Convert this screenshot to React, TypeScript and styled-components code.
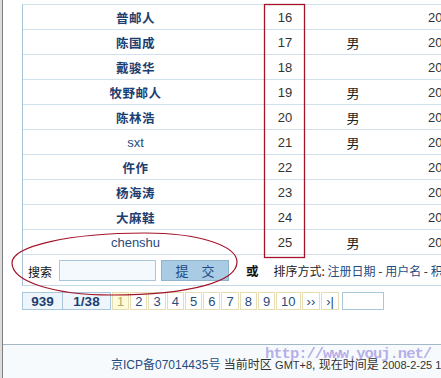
import React from 'react';
import styled, { createGlobalStyle, css } from 'styled-components';

interface Member {
  no: number;
  name: string;
  sex: string;
  latin?: boolean;
}

const members: Member[] = [
  { no: 16, name: '普邮人', sex: '' },
  { no: 17, name: '陈国成', sex: '男' },
  { no: 18, name: '戴骏华', sex: '' },
  { no: 19, name: '牧野邮人', sex: '男' },
  { no: 20, name: '陈林浩', sex: '男' },
  { no: 21, name: 'sxt', sex: '男', latin: true },
  { no: 22, name: '仵作', sex: '' },
  { no: 23, name: '杨海涛', sex: '' },
  { no: 24, name: '大麻鞋', sex: '' },
  { no: 25, name: 'chenshu', sex: '男', latin: true },
];

const pages = ['1', '2', '3', '4', '5', '6', '7', '8', '9', '10', '››', '›|'];

export default function App() {
  return (
    <Root>
      <GlobalStyle />
      <Frame>
        <Main>
          <Board>
            {members.map((m) => (
              <Row key={m.no}>
                <NameCell latin={!!m.latin}>{m.name}</NameCell>
                <NumCell>{m.no}</NumCell>
                <SexCell>{m.sex}</SexCell>
                <DateCell>2008-02-2{m.no % 10}</DateCell>
              </Row>
            ))}
            <SearchRow>
              <Label>搜索</Label>
              <SearchInput />
              <Submit>提　交</Submit>
              <Or>或</Or>
              <Sort>
                排序方式: <SortLink>注册日期</SortLink> - <SortLink>用户名</SortLink> - <SortLink>积分</SortLink>
              </Sort>
            </SearchRow>
          </Board>
          <Pager>
            <Stat>939</Stat>
            <Stat joined>1/38</Stat>
            {pages.map((p, i) => (
              <PageBox key={p} current={i === 0}>
                {p}
              </PageBox>
            ))}
            <JumpInput />
          </Pager>
        </Main>
        <Footer>
          <FooterText>
            <FooterLink>京ICP备07014435号</FooterLink> 当前时区 <Small>GMT+8</Small>, 现在时间是 <Small>2008-2-25 12:30</Small>
          </FooterText>
          <Watermark>http://www.youj.net/</Watermark>
        </Footer>
      </Frame>
      <Marks width="441" height="378" viewBox="0 0 441 378">
        <rect x="264.5" y="4.5" width="40" height="253" fill="none" stroke="#a3142a" strokeWidth="1.3" />
        <path
          d="M 12 263 C 12 246, 70 233, 145 233 C 200 233, 237 246, 237 262 C 237 281, 192 295, 112 295 C 52 295, 12 281, 12 263 Z"
          fill="none"
          stroke="#a3142a"
          strokeWidth="1.2"
        />
      </Marks>
    </Root>
  );
}

const GlobalStyle = createGlobalStyle`
  html, body {
    margin: 0;
    padding: 0;
    background: #dcdcdc;
    overflow: hidden;
  }
  body {
    font-family: 'Liberation Sans', 'Noto Sans CJK SC', sans-serif;
    font-size: 12px;
    color: #333;
  }
`;

const Root = styled.div`
  position: relative;
  width: 441px;
  height: 378px;
  overflow: hidden;
`;

const Frame = styled.div`
  margin-left: 2px;
  height: 378px;
  display: flex;
  flex-direction: column;
  background: #fff;
  border-left: 1px solid #808080;
`;

const Main = styled.div`
  padding: 4px 0 0 19px;
`;

const Board = styled.div`
  width: 560px;
  border-left: 1px solid #a9c4d6;
  border-top: 1px solid #cfe2ee;
`;

const Row = styled.div`
  display: grid;
  grid-template-columns: 225px 74px 62px 1fr;
  height: 24px;
  align-items: center;
  border-bottom: 1px solid #cfe2ee;
`;

const NameCell = styled.div<{ latin: boolean }>`
  text-align: center;
  color: #1d3e70;
  font-weight: bold;
  font-size: 12.5px;
  letter-spacing: 0.5px;
  font-family: 'Noto Sans CJK SC', sans-serif;

  ${(props) =>
    props.latin &&
    css`
      font-family: 'Liberation Sans', sans-serif;
      font-weight: normal;
      font-size: 13px;
      letter-spacing: 0;
      color: #2a4b7c;
    `}
`;

const NumCell = styled.div`
  text-align: center;
  font-size: 13px;
  color: #333;
`;

const SexCell = styled.div`
  text-align: center;
  font-size: 13px;
  color: #222;
  font-family: 'Noto Sans CJK SC', sans-serif;
`;

const DateCell = styled.div`
  padding-left: 44px;
  font-size: 13px;
  color: #333;
  white-space: nowrap;
`;

const SearchRow = styled.div`
  display: flex;
  align-items: center;
  height: 30px;
  padding-left: 5px;
  border-bottom: 1px solid #c4d9e6;
  white-space: nowrap;
`;

const Label = styled.span`
  font-family: 'Noto Sans CJK SC', sans-serif;
  font-size: 12px;
  color: #111;
  margin-top: 3px;
`;

const SearchInput = styled.input`
  box-sizing: border-box;
  width: 97px;
  height: 21px;
  margin-left: 7px;
  border: 1px solid #a9c7dc;
  background: #f3f9fd;
  padding: 0 3px;
`;

const Submit = styled.button`
  box-sizing: border-box;
  width: 68px;
  height: 21px;
  margin-left: 5px;
  border: 1px solid #8fb3cd;
  background: #a9cbe3;
  color: #1d4a85;
  font-family: 'Noto Sans CJK SC', sans-serif;
  font-size: 13px;
  padding: 0;
  line-height: 19px;
`;

const Or = styled.span`
  margin-left: 17px;
  font-weight: bold;
  font-size: 12.5px;
  color: #111;
  font-family: 'Noto Sans CJK SC', sans-serif;
`;

const Sort = styled.span`
  margin-left: 15px;
  font-size: 12px;
  color: #222;
  font-family: 'Noto Sans CJK SC', sans-serif;
`;

const SortLink = styled.span`
  color: #1f4c82;
`;

const Pager = styled.div`
  display: flex;
  align-items: stretch;
  height: 18px;
  margin-top: 6px;
  font-family: 'Liberation Sans', sans-serif;
`;

const Stat = styled.span<{ joined?: boolean }>`
  box-sizing: border-box;
  display: flex;
  align-items: center;
  justify-content: center;
  width: ${(props) => (props.joined ? '48px' : '41px')};
  border: 1px solid #a9c7dc;
  background: #eef5fb;
  color: #1d3e70;
  font-weight: bold;
  font-size: 13.5px;

  ${(props) =>
    props.joined &&
    css`
      border-left: none;
      margin-right: 1px;
    `}
`;

const PageBox = styled.span<{ current: boolean }>`
  box-sizing: border-box;
  display: flex;
  align-items: center;
  justify-content: center;
  min-width: 17px;
  padding: 0 4px;
  margin-right: 1px;
  border: 1px solid #e6ddb4;
  background: #fff;
  color: #2a4b7c;
  font-size: 13px;

  ${(props) =>
    props.current &&
    css`
      background: #fdfbd8;
      color: #b4aa6a;
    `}
`;

const JumpInput = styled.input`
  box-sizing: border-box;
  width: 42px;
  height: 18px;
  margin-left: 2px;
  border: 1px solid #a9c7dc;
  background: #fff;
`;

const Footer = styled.div`
  position: relative;
  margin-top: auto;
  height: 33px;
  border-top: 1px solid #a3b8c6;
  background: #f7fafc;
  display: flex;
  align-items: center;
  padding-left: 108px;
  white-space: nowrap;
  overflow: hidden;
`;

const FooterText = styled.div`
  margin-top: 4px;
  font-size: 12px;
  color: #333;
  font-family: 'Liberation Sans', 'Noto Sans CJK SC', sans-serif;
`;

const Small = styled.span`
  font-size: 11px;
`;

const FooterLink = styled.span`
  color: #1f4c82;
`;

const Watermark = styled.span`
  position: absolute;
  left: 262px;
  top: -3px;
  font-family: 'Liberation Mono', monospace;
  font-weight: bold;
  font-size: 15.5px;
  letter-spacing: -1px;
  line-height: 24px;
  color: rgba(125, 110, 215, 0.55);
`;

const Marks = styled.svg`
  position: absolute;
  left: 0;
  top: 0;
  pointer-events: none;
`;
